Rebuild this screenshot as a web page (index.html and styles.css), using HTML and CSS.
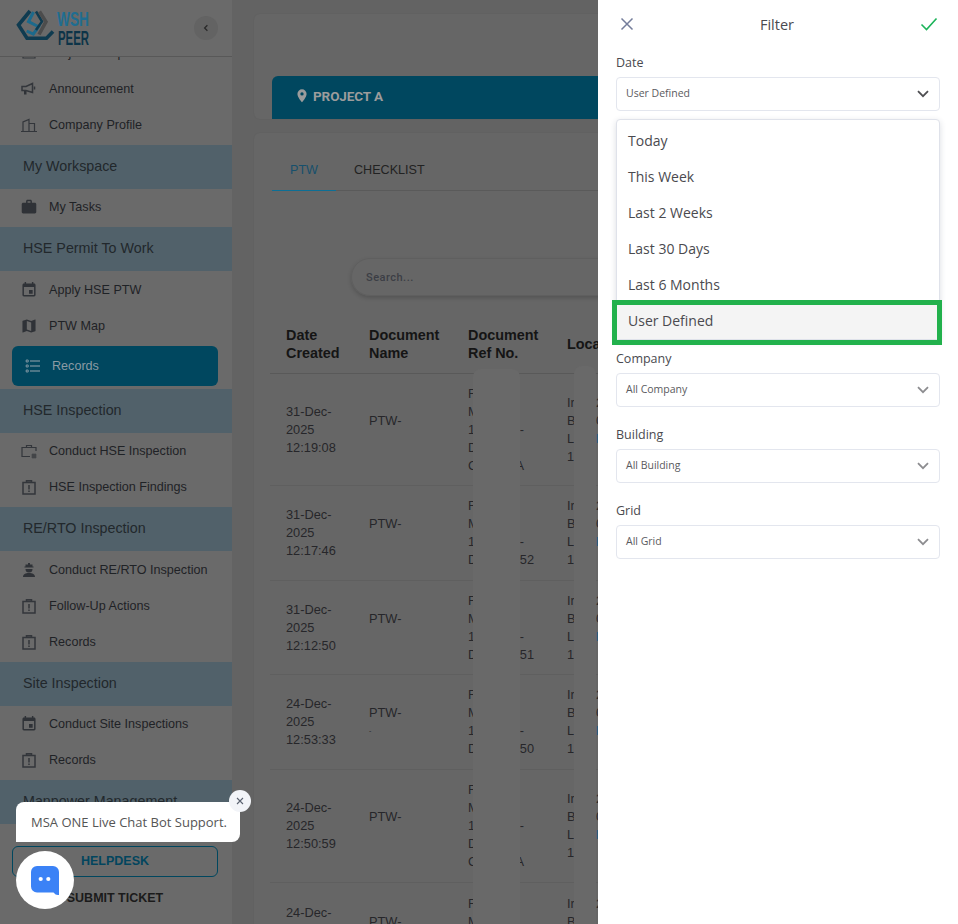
FILE: index.html
```html
<!DOCTYPE html>
<html lang="en">
<head>
<meta charset="utf-8">
<title>PTW Records</title>
<link rel="stylesheet" href="styles.css">
</head>
<body>
<div class="app">
  <aside class="sidebar">
    <header class="side-head">
      <svg class="logo" viewBox="0 0 76 44" width="76" height="44">
        <path d="M14 5 2.500 19 11 32.300H30.500L37 25.500" class="lg-dark"/>
        <path d="M17.500 6 12.500 15.700 22.500 20.700 17.300 28 10.700 25" class="lg-mid"/>
        <path d="M20 5.500 26 15.500 20 24" class="lg-dark-thin"/>
        <path d="M23.500 5.500 30 15.700 23 28.500" class="lg-grey"/>
        <text x="41" y="20" class="lg-wsh" textLength="32" lengthAdjust="spacingAndGlyphs">WSH</text>
        <text x="42" y="38.500" class="lg-peer" textLength="31" lengthAdjust="spacingAndGlyphs">PEER</text>
      </svg>
      <button class="collapse"><svg width="8" height="8" viewBox="0 0 8 8"><path d="M5.400 1.200 2.600 4l2.800 2.800" fill="none" stroke="#2a2a2a" stroke-width="1.300"/></svg></button>
    </header>
    <nav class="side-nav">
      <a class="item"><svg class="ic" viewBox="0 0 16 16"><path d="M2 3h12v10H2z" class="st"/></svg>Project Setup</a>
      <a class="item"><svg class="ic" viewBox="0 0 16 16"><path d="M1 5.500h4L11.500 2.500v9L5 9.500H1z" class="st2"/><path d="M3 10h2.500v3.500H3z" class="fl"/><path d="M13.500 5.500v3" class="st2"/></svg>Announcement</a>
      <a class="item"><svg class="ic" viewBox="0 0 16 16"><path d="M0 14.500h16M2 14.500V5l6-2.500v12M8 6.500h5.500v8" class="st"/></svg>Company Profile</a>
      <div class="group">My Workspace</div>
      <a class="item"><svg class="ic" viewBox="1 1 22 22"><path d="M20 6h-4V4c0-1.110-.89-2-2-2h-4c-1.110 0-2 .89-2 2v2H4c-1.110 0-1.990.89-1.990 2L2 19c0 1.110.89 2 2 2h16c1.110 0 2-.89 2-2V8c0-1.110-.89-2-2-2zm-6 0h-4V4h4v2z" class="fl"/></svg>My Tasks</a>
      <div class="group">HSE Permit To Work</div>
      <a class="item"><svg class="ic" viewBox="1 1 22 22"><path d="M17 12h-5v5h5v-5zM16 1v2H8V1H6v2H5c-1.110 0-1.990.9-1.990 2L3 19c0 1.100.89 2 2 2h14c1.100 0 2-.9 2-2V5c0-1.100-.9-2-2-2h-1V1h-2zm3 18H5V8h14v11z" class="fl"/></svg>Apply HSE PTW</a>
      <a class="item"><svg class="ic" viewBox="1 1 22 22"><path d="M20.500 3l-.16.03L15 5.100 9 3 3.360 4.900c-.21.07-.36.25-.36.48V20.500c0 .28.22.5.5.5l.16-.03L9 18.900l6 2.100 5.640-1.900c.21-.07.36-.25.36-.48V3.500c0-.28-.22-.5-.5-.5zM15 19l-6-2.110V5l6 2.110V19z" class="fl"/></svg>PTW Map</a>
      <a class="item active"><svg class="ic" viewBox="0 0 16 16"><path d="M5 3h10M5 8h10M5 13h10" class="st-a"/><path d="M1.200 2h2v2h-2zM1.200 7h2v2h-2zM1.200 12h2v2h-2z" class="st-b"/></svg>Records</a>
      <div class="group">HSE Inspection</div>
      <a class="item"><svg class="ic" viewBox="0 0 16 16"><path d="M9 13.500H1V4.500h14V8M5.500 4.500V2.500h5v2" class="st"/><path d="M10.500 12h5M10.500 14h5M12 10.500v5M14 10.500v5" class="st3"/></svg>Conduct HSE Inspection</a>
      <a class="item"><svg class="ic" viewBox="0 0 16 16"><path d="M2 3.500h12v11.500H2zM5.500 3.500V1.800h5v1.700" class="st2"/><path d="M7.300 6h1.400v4.500H7.300zM7.300 11.500h1.400v1.500H7.300z" class="fl"/></svg>HSE Inspection Findings</a>
      <div class="group">RE/RTO Inspection</div>
      <a class="item"><svg class="ic" viewBox="0 0 16 16"><path d="M7 1h2v1.500h2.500v2h1v1h-9v-1h1v-2H7zM4.500 7h7a3.500 3.500 0 0 1-7 0zM2 15c0-2.800 2.500-4 6-4s6 1.200 6 4z" class="fl"/></svg>Conduct RE/RTO Inspection</a>
      <a class="item"><svg class="ic" viewBox="0 0 16 16"><path d="M2 3.500h12v11.500H2zM5.500 3.500V1.800h5v1.700" class="st2"/><path d="M7.300 6h1.400v4.500H7.300zM7.300 11.500h1.400v1.500H7.300z" class="fl"/></svg>Follow-Up Actions</a>
      <a class="item"><svg class="ic" viewBox="0 0 16 16"><path d="M2 3.500h12v11.500H2zM5.500 3.500V1.800h5v1.700" class="st2"/><path d="M7.300 6h1.400v4.500H7.300zM7.300 11.500h1.400v1.500H7.300z" class="fl"/></svg>Records</a>
      <div class="group">Site Inspection</div>
      <a class="item"><svg class="ic" viewBox="1 1 22 22"><path d="M17 12h-5v5h5v-5zM16 1v2H8V1H6v2H5c-1.110 0-1.990.9-1.990 2L3 19c0 1.100.89 2 2 2h14c1.100 0 2-.9 2-2V5c0-1.100-.9-2-2-2h-1V1h-2zm3 18H5V8h14v11z" class="fl"/></svg>Conduct Site Inspections</a>
      <a class="item"><svg class="ic" viewBox="0 0 16 16"><path d="M2 3.500h12v11.500H2zM5.500 3.500V1.800h5v1.700" class="st2"/><path d="M7.300 6h1.400v4.500H7.300zM7.300 11.500h1.400v1.500H7.300z" class="fl"/></svg>Records</a>
      <div class="group">Manpower Management</div>
    </nav>
    <footer class="side-foot">
      <a class="helpdesk">HELPDESK</a>
      <a class="ticket">SUBMIT TICKET</a>
    </footer>
  </aside>

  <main class="content">
    <section class="card card-top">
      <div class="project">
        <svg viewBox="0 0 12 16" width="10" height="14"><path d="M6 0a5.500 5.500 0 0 0-5.500 5.500C.5 9.500 6 15.500 6 15.500s5.500-6 5.500-10A5.500 5.500 0 0 0 6 0zm0 7.500a2 2 0 1 1 0-4 2 2 0 0 1 0 4z" fill="#9c9c9c"/></svg>
        <span>PROJECT A</span>
      </div>
    </section>
    <section class="card card-main">
      <div class="tabs">
        <a class="tab tab-on">PTW</a>
        <a class="tab">CHECKLIST</a>
      </div>
      <div class="search"><span>Search...</span></div>
      <div class="table">
        <div class="row head">
          <div class="c c1">Date Created</div>
          <div class="c c2">Document Name</div>
          <div class="c c3">Document Ref No.</div>
          <div class="c c4">Location</div>
        </div>
        <div class="row r1">
          <div class="c c1">31-Dec-<br>2025<br>12:19:08</div>
          <div class="c c2">PTW-<br>&nbsp;</div>
          <div class="c c3"><span class="ln">F</span><span class="ln">M</span><span class="ln">1<i>-</i></span><span class="ln">D</span><span class="ln">C<i>A</i></span></div>
          <div class="c c4"><span class="ln">Ir</span><span class="ln">B</span><span class="ln">L</span><span class="ln">1</span></div>
          <div class="c c5"><span class="ln">2</span><span class="ln">0</span><span class="ln link">l</span><span class="ln">&nbsp;</span></div>
        </div>
        <div class="row r2">
          <div class="c c1">31-Dec-<br>2025<br>12:17:46</div>
          <div class="c c2">PTW-<br>&nbsp;</div>
          <div class="c c3"><span class="ln">F</span><span class="ln">M</span><span class="ln">1<i>-</i></span><span class="ln">D<i class="n">52</i></span></div>
          <div class="c c4"><span class="ln">Ir</span><span class="ln">B</span><span class="ln">L</span><span class="ln">1</span></div>
          <div class="c c5"><span class="ln">2</span><span class="ln">0</span><span class="ln link">l</span><span class="ln">&nbsp;</span></div>
        </div>
        <div class="row r3">
          <div class="c c1">31-Dec-<br>2025<br>12:12:50</div>
          <div class="c c2">PTW-<br>&nbsp;</div>
          <div class="c c3"><span class="ln">F</span><span class="ln">M</span><span class="ln">1<i>-</i></span><span class="ln">D<i class="n">51</i></span></div>
          <div class="c c4"><span class="ln">Ir</span><span class="ln">B</span><span class="ln">L</span><span class="ln">1</span></div>
          <div class="c c5"><span class="ln">2</span><span class="ln">0</span><span class="ln link">l</span><span class="ln">&nbsp;</span></div>
        </div>
        <div class="row r4">
          <div class="c c1">24-Dec-<br>2025<br>12:53:33</div>
          <div class="c c2">PTW-<br><span class="tick">-</span></div>
          <div class="c c3"><span class="ln">F</span><span class="ln">M</span><span class="ln">1<i>-</i></span><span class="ln">D<i class="n">50</i></span></div>
          <div class="c c4"><span class="ln">Ir</span><span class="ln">B</span><span class="ln">L</span><span class="ln">1</span></div>
          <div class="c c5"><span class="ln">2</span><span class="ln">0</span><span class="ln link">l</span><span class="ln">&nbsp;</span></div>
        </div>
        <div class="row r5">
          <div class="c c1">24-Dec-<br>2025<br>12:50:59</div>
          <div class="c c2">PTW-<br>&nbsp;</div>
          <div class="c c3"><span class="ln">F</span><span class="ln">M</span><span class="ln">1<i>-</i></span><span class="ln">D</span><span class="ln">C<i>A</i></span></div>
          <div class="c c4"><span class="ln">Ir</span><span class="ln">B</span><span class="ln">L</span><span class="ln">1</span></div>
          <div class="c c5"><span class="ln">2</span><span class="ln">0</span><span class="ln link">l</span><span class="ln">&nbsp;</span></div>
        </div>
        <div class="row r6">
          <div class="c c1">24-Dec-<br>&nbsp;<br>&nbsp;</div>
          <div class="c c2">PTW-<br>&nbsp;</div>
          <div class="c c3"><span class="ln">F</span><span class="ln">M</span><span class="ln">&nbsp;</span><span class="ln">&nbsp;</span></div>
          <div class="c c4"><span class="ln">Ir</span><span class="ln">B</span><span class="ln">&nbsp;</span><span class="ln">&nbsp;</span></div>
          <div class="c c5"><span class="ln">2</span><span class="ln">&nbsp;</span><span class="ln">&nbsp;</span><span class="ln">&nbsp;</span></div>
        </div>
      </div>
      <div class="redact redact-a"></div>
      <div class="redact redact-b"></div>
    </section>
  </main>

  <aside class="filter">
    <header class="filter-head">
      <svg width="14" height="14" viewBox="0 0 14 14"><path d="M1.500 1.500l11 11M12.500 1.500l-11 11" fill="none" stroke="#747d9b" stroke-width="1.500"/></svg>
      <h2>Filter</h2>
      <svg width="18" height="14" viewBox="0 0 18 14"><path d="M1.500 7.500 6.500 12.500 16.500 1.500" fill="none" stroke="#1cb45a" stroke-width="1.600"/></svg>
    </header>
    <div class="field field-date">
      <label>Date</label>
      <div class="select"><span>User Defined</span><svg class="chev chev-dark" viewBox="0 0 12 8"><path d="M1 1.200 6 6.200l5-5"/></svg></div>
      <ul class="menu">
        <li>Today</li>
        <li>This Week</li>
        <li>Last 2 Weeks</li>
        <li>Last 30 Days</li>
        <li>Last 6 Months</li>
        <li class="sel">User Defined</li>
      </ul>
      <div class="callout"></div>
    </div>
    <div class="field">
      <label>Company</label>
      <div class="select"><span>All Company</span><svg class="chev" viewBox="0 0 12 8"><path d="M1 1.200 6 6.200l5-5"/></svg></div>
    </div>
    <div class="field">
      <label>Building</label>
      <div class="select"><span>All Building</span><svg class="chev" viewBox="0 0 12 8"><path d="M1 1.200 6 6.200l5-5"/></svg></div>
    </div>
    <div class="field">
      <label>Grid</label>
      <div class="select"><span>All Grid</span><svg class="chev" viewBox="0 0 12 8"><path d="M1 1.200 6 6.200l5-5"/></svg></div>
    </div>
  </aside>
</div>

<div class="chat-tip">MSA ONE Live Chat Bot Support.</div>
<button class="chat-close"><svg width="8" height="8" viewBox="0 0 8 8"><path d="M1 1l6 6M7 1 1 7" fill="none" stroke="#5a6270" stroke-width="1.100"/></svg></button>
<button class="chat-btn">
  <svg width="28" height="29" viewBox="0 0 28 29"><path d="M6 0h16a6 6 0 0 1 6 6v23h-1c-2 0-3-.8-4.500-2.500H6a6 6 0 0 1-6-6V6a6 6 0 0 1 6-6z" fill="#3b82f6"/><circle cx="9.700" cy="13" r="2.100" fill="#fff"/><circle cx="17.300" cy="13" r="2.100" fill="#fff"/></svg>
</button>
</body>
</html>
```

FILE: styles.css
```css
* { box-sizing: border-box; }
html, body { margin: 0; height: 100%; overflow: hidden; }
body { font-family: "Liberation Sans", Arial, sans-serif; background: #636363; color: #222; }
.app { display: flex; height: 924px; width: 958px; overflow: hidden; }

/* sidebar */
.sidebar { width: 232px; flex: none; height: 924px; background: #6a6a6a; display: flex; flex-direction: column; }
.side-head { height: 57px; flex: none; border-bottom: 1px solid #585858; display: flex; align-items: center; justify-content: space-between; padding: 0 14px 0 16px; position: relative; z-index: 1; background: #6a6a6a; }
.logo { display: block; }
.lg-dark { fill: none; stroke: #0f3b50; stroke-width: 3.600; }
.lg-mid { fill: none; stroke: #1c6a8c; stroke-width: 3; }
.lg-grey { fill: none; stroke: #4c4c4c; stroke-width: 3.500; }
.lg-dark-thin { fill: none; stroke: #0f3b50; stroke-width: 2.500; }
.lg-wsh, .lg-peer { font-family: "Liberation Sans Narrow", "Liberation Sans", sans-serif; font-weight: 700; font-size: 21px; }
.lg-wsh { fill: #1f6d90; }
.lg-peer { fill: #0d3448; }
.collapse { width: 24px; height: 24px; border: 0; border-radius: 50%; background: #636363; padding: 0; display: flex; align-items: center; justify-content: center; }
.side-nav { height: 769px; flex: none; overflow: hidden; }
.item { display: flex; align-items: center; height: 36px; padding: 1.500px 0 0 21px; font-size: 12.600px; color: #1f2226; gap: 12px; }
.item:first-child { margin-top: -23px; }
.ic { width: 16px; height: 16px; flex: none; }
.st { fill: none; stroke: #33363b; stroke-width: 1.200; }
.st2 { fill: none; stroke: #33363b; stroke-width: 1.500; }
.st3 { fill: none; stroke: #33363b; stroke-width: .9; }
.fl { fill: #2f3237; }
.st-a { fill: none; stroke: #96a5ad; stroke-width: 1.200; }
.st-b { fill: none; stroke: #96a5ad; stroke-width: .8; }
.group { height: 44px; margin-top: 2.500px; display: flex; align-items: center; padding: 0 0 1.500px 23px; background: #51616a; font-size: 14.300px; color: #22282c; }
.active { height: 40px; margin: 3px 14px 1px 12px; padding: 0 0 1px 13px; gap: 11px; background: #00475f; border-radius: 6px; color: #8b9ba4; }
.side-foot { flex: 1; display: flex; flex-direction: column; align-items: center; padding: 20px 14px 0 12px; }
.helpdesk { display: block; width: 100%; height: 31px; line-height: 29px; text-align: center; border: 1px solid #00475f; border-radius: 6px; color: #02455e; font-weight: 700; font-size: 12.500px; }
.ticket { margin-top: 13px; font-weight: 700; font-size: 12.500px; color: #1b1b1b; line-height: 16px; }

/* main */
.content { width: 366px; flex: none; padding: 14px 0 0 22px; overflow: hidden; position: relative; }
.card { width: 500px; background: #666; border-radius: 6px; box-shadow: 0 0 2px rgba(0,0,0,.06); }
.card-top { height: 105px; padding: 62px 0 0 18px; }
.project { height: 43px; background: #00475f; border-radius: 6px 0 0 0; display: flex; align-items: center; gap: 6px; padding: 0 0 4px 25px; font-family: Roboto, sans-serif; font-weight: 700; font-size: 13.500px; color: #9c9c9c; letter-spacing: -.1px; }
.card-main { margin-top: 14px; height: 800px; padding: 22px 0 0 18px; position: relative; }
.tabs { display: flex; height: 36px; border-bottom: 1px solid #5a5a5a; font-size: 12.600px; }
.tab { width: 64px; text-align: center; line-height: 30px; color: #222; }
.tab + .tab { width: auto; margin-left: 18px; }
.tab-on { color: #17506c; border-bottom: 1px solid #0d6f95; height: 36px; }
.search { margin: 67px 0 0 79px; width: 400px; height: 38px; border-radius: 19px; border: 1px solid #5f5f5f; box-shadow: 0 2px 4px rgba(0,0,0,.18); display: flex; align-items: center; padding-left: 14px; font-size: 11px; font-weight: 500; letter-spacing: .5px; color: #3c3e45; font-family: Roboto, sans-serif; }
.table { margin: 20px 0 0 -2px; width: 360px; font-size: 12.800px; line-height: 18px; color: #26262a; }
.row { display: flex; align-items: center; border-bottom: 1px solid #5f5f5f; }
.head { height: 58px; padding-bottom: 2px; font-size: 14.400px; font-weight: 700; color: #151515; border-bottom-color: #595959; }
.r1 { height: 112px; }
.r2 { height: 95px; }
.r3 { height: 94px; }
.r4 { height: 95px; }
.r5 { height: 113px; }
.r6 { height: 96px; border: 0; }
.c { flex: none; padding-left: 14px; }
.c1 { width: 85px; padding-left: 16px; }
.c2 { width: 99px; padding-left: 14px; }
.c3 { width: 99px; padding-left: 14px; }
.c4 { width: 43px; padding-left: 14px; }
.c5 { width: 40px; padding-left: 0; }
.head .c4 { width: 70px; }
.ln { display: flex; justify-content: space-between; width: 56px; white-space: nowrap; }
.ln i { font-style: normal; }
.ln i.n { margin-right: -10px; }
.link { color: #1d5a80; }
.tick { font-size: 7px; vertical-align: top; }
.redact { position: absolute; bottom: 0; background: #696969; border-radius: 8px 8px 0 0; }
.redact-a { left: 219px; width: 47px; top: 236px; }
.redact-b { left: 320px; width: 22px; top: 233px; }

/* filter */
.filter { position: relative; width: 360px; flex: none; background: #fff; padding: 0 18px; font-family: "Open Sans", sans-serif; color: #4a4a4f; }
.filter-head { display: flex; align-items: center; justify-content: space-between; height: 48px; padding: 0 2px 0 4px; }
.filter-head h2 { margin: 0; font-size: 14.500px; font-weight: 400; color: #4a4a4f; }
.field { margin-bottom: 13px; }
.field-date { position: relative; margin-bottom: 233px; }
.field label { display: block; font-size: 12.500px; line-height: 18px; height: 21px; padding-top: 6px; margin-bottom: 8px; }
.select { display: flex; align-items: center; justify-content: space-between; height: 34px; border: 1px solid #e3e6ee; border-radius: 4px; padding: 0 10px 0 9px; font-size: 10.500px; color: #5a5a5e; }
.select span { padding-bottom: 2px; }
.chev { width: 12px; height: 8px; }
.chev path { fill: none; stroke: #8d8d90; stroke-width: 1.800; }
.chev-dark path { stroke: #4f4f52; }
.menu { position: absolute; left: 0; right: 0; top: 71px; height: 221px; margin: 0; padding: 3px 0 0; list-style: none; background: #fff; border: 1px solid #dfe2ea; border-radius: 4px; box-shadow: 0 2px 6px rgba(40,50,80,.16); font-size: 14px; }
.menu li { height: 36px; line-height: 36px; padding-left: 11px; color: #4a4a4f; }
.menu li.sel { background: #f4f4f4; }
.callout { position: absolute; left: -4px; right: -2px; top: 252px; height: 45px; border: 5px solid #22b14c; }

/* chat */
.chat-tip { position: absolute; left: 16px; top: 802px; width: 224px; height: 40px; background: #fff; border-radius: 8px 8px 8px 0; padding-left: 15px; line-height: 40px; font-family: "Open Sans", sans-serif; font-size: 13px; color: #555; }
.chat-close { position: absolute; left: 229px; top: 790px; width: 22px; height: 22px; border: 0; padding: 0; border-radius: 50%; background: #f2f4f8; display: flex; align-items: center; justify-content: center; }
.chat-btn { position: absolute; left: 16px; top: 851px; width: 58px; height: 58px; border: 0; padding: 0; border-radius: 50%; background: #fff; display: flex; align-items: center; justify-content: center; }
```
